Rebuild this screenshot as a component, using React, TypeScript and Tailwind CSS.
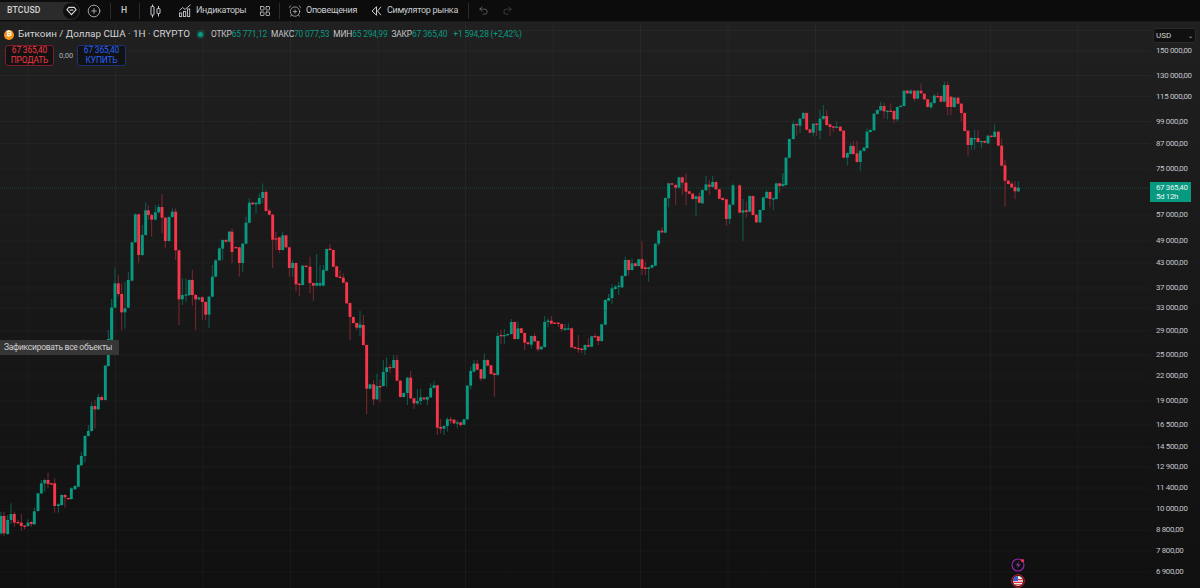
import { AlarmClockPlus, CirclePlus, LayoutGrid, Redo2, Undo2 } from "lucide-react";

const A = `g 3 348 400 335 405|r 12 348 400 335 408|g 23 360 402 345 405|g 33 342 360 310 372|r 43 342 368 335 380|r 54 366 369 360 372|r 64 368 378 342 392|r 74 377 381 375 388|g 84 368 378 358 380|r 94 366 372 364 380|g 103 334 373 322 375|g 114 280 333 278 335|g 124 250 280 240 283|g 134 240 250 236 275|r 144 240 252 218 265|r 154 250 252 248 255|r 164 250 318 235 338|g 175 313 318 310 338|g 185 285 315 283 318|r 195 285 292 282 323|r 205 294 297 292 299|g 214 265 297 262 299|g 225 258 268 255 270|g 235 195 260 192 262|g 244 168 196 155 198|g 255 108 168 105 188|g 265 93 108 75 110|g 275 18 93 5 95|r 285 18 28 0 85|g 295 -9 28 -18 30|r 305 -9 0 -14 3|g 316 -103 0 -106 2|g 325 -183 -102 -210 -100`;
const B = `g 35 413 510 388 512|g 45 340 413 292 415|r 55 340 372 315 380|r 65 372 427 340 480|g 75 415 427 335 475|g 85 330 413 305 415|g 96 217 332 215 334|g 106 133 217 130 219|r 116 133 255 130 278|g 127 195 255 165 258|g 137 121 195 97 197|r 145 121 135 105 150|r 155 135 149 130 200|g 166 127 149 105 151|g 176 111 127 103 130|r 186 111 143 72 190|r 196 143 213 140 235|g 207 141 213 139 215|g 217 125 141 115 143|r 227 125 241 115 270|r 237 241 388 239 465|g 247 375 388 325 405|g 258 373 376 325 395|g 268 330 375 328 378|r 277 330 375 300 407|r 287 375 388 372 480|g 297 382 388 380 392|r 307 382 396 378 450|r 317 396 434 394 450|g 327 380 434 378 474|g 337 320 380 285 382|g 347 271 320 268 322|g 358 235 271 232 273|g 368 210 236 208 270|r 378 210 215 207 218|g 388 185 215 183 217|r 396 185 246 175 280|r 408 231 234 229 236|r 418 232 279 230 320|g 428 221 279 219 305|g 438 158 221 140 223|g 448 98 158 85 160|r 458 98 103 96 105|g 468 98 103 96 130|g 478 84 102 70 104|g 488 66 84 40 100|r 498 66 123 60 125|r 508 122 134 116 136|r 518 134 209 132 295|r 528 205 208 185 240|r 538 202 240 200 250|g 548 196 240 185 242|r 558 196 232 194 234|r 568 232 294 230 320|g 578 279 294 270 320|r 588 279 343 277 365|r 598 341 345 338 378|g 608 287 345 285 347|r 618 287 290 285 292|r 630 290 339 260 370|r 640 339 347 337 392|g 650 339 347 252 349|g 660 339 347 285 349|g 670 300 347 285 349|g 680 237 302 235 304|r 690 236 240 222 242|r 700 240 290 238 292|r 710 289 321 287 323|r 720 320 324 300 326|r 730 323 338 310 340|r 740 337 400 335 402|r 750 399 441 397 510|r 760 441 459 439 461|r 770 459 473 457 480|g 780 463 473 455 475`;
const C = `g 60 255 263 213 290|r 70 255 315 225 317|r 80 315 446 313 522|g 90 433 446 431 448|r 101 433 478 420 495|g 111 438 478 400 480|r 120 438 440 418 487|g 130 396 438 360 440|g 140 382 396 352 440|r 150 381 384 372 400|g 161 360 384 345 386|r 171 360 422 345 424|r 181 422 471 420 473|g 191 459 471 457 473|g 202 413 459 411 495|r 212 413 475 393 477|r 222 475 490 473 507|g 232 483 490 447 495|g 242 472 483 447 495|r 252 473 478 471 480|g 262 471 479 469 495|g 272 444 472 430 474|g 282 436 444 423 446|r 292 436 563 434 585|r 302 561 566 537 580|g 312 558 566 556 585|g 322 538 558 532 575|r 332 538 540 530 552|r 342 539 550 537 552|g 352 547 550 540 565|r 362 547 555 545 560|g 372 538 554 536 556|g 382 437 538 435 540|g 392 393 437 380 448|g 402 371 395 360 397|r 412 371 389 360 391|r 423 388 416 386 423|g 433 360 416 340 418|r 443 360 377 358 379|r 453 376 402 374 404|r 463 400 405 398 470|g 473 288 405 278 407|r 483 285 287 270 313|g 493 285 288 267 313|g 503 282 285 280 287|g 514 246 282 237 284|r 524 246 297 244 299|g 534 265 297 245 299|r 544 265 279 263 281|r 554 279 308 277 330|r 564 307 312 305 316|g 574 288 314 286 325|r 584 288 304 280 306|r 594 303 328 301 335|g 604 320 328 318 330|g 614 246 321 228 323|g 624 242 246 235 262|r 634 242 251 228 253|r 644 248 250 246 252|r 655 248 252 246 262|r 665 252 267 250 275|g 675 265 270 252 272|g 685 265 268 250 270|r 695 265 322 263 324|r 705 321 325 319 327|r 715 324 327 285 338|r 725 326 330 324 340|g 735 315 330 313 345|r 745 315 320 295 322|g 755 289 320 287 322|r 765 288 291 280 293|r 775 289 303 287 315|g 785 253 303 251 305|g 796 181 254 179 256|g 806 174 182 162 184`;
const D = `g 36 355 384 343 402|g 46 350 357 345 359|g 56 347 350 335 375|g 66 318 352 315 354|g 76 270 318 260 320|r 86 270 300 268 315|g 96 280 300 265 302|r 106 280 288 278 290|g 116 268 288 266 290|r 126 268 296 213 315|r 136 292 297 275 315|g 146 292 297 290 335|g 156 285 293 283 295|g 166 221 287 219 289|g 176 182 221 180 228|r 186 182 187 172 189|g 196 84 188 82 190|g 206 40 85 38 112|r 216 40 44 38 46|r 227 45 53 43 104|g 237 22 53 20 55|r 247 22 38 20 75|r 258 38 65 12 105|r 268 64 71 62 73|r 278 71 87 69 89|g 288 79 87 77 140|r 298 79 98 68 100|g 307 60 100 58 102|g 318 43 61 18 63|r 328 44 50 30 75|g 338 36 51 18 53|r 348 36 58 34 60|r 358 58 86 56 88|r 368 84 90 82 92|r 379 88 147 86 168|g 389 104 147 102 162|g 399 46 104 40 106|r 419 46 128 44 130|g 429 121 128 87 213|r 439 121 126 95 143|g 449 78 125 76 127|r 459 78 135 76 137|r 469 134 157 132 159|g 480 120 157 118 159|g 490 82 120 80 122|g 500 66 84 60 86|r 510 66 87 64 112|g 520 85 87 82 120|g 529 40 87 38 89|r 539 40 48 38 68|g 549 42 48 10 50`;
const E = `g 18 263 345 261 347|g 8 343 346 310 350|g 28 207 263 205 265|g 40 162 207 152 209|r 50 162 165 160 197|g 60 146 167 144 190|g 70 129 146 125 148|r 80 129 179 127 181|r 90 178 188 176 190|g 100 161 188 159 200|r 110 161 164 159 197|g 120 146 182 120 208|g 130 138 147 105 149|r 140 138 165 120 167|r 150 163 171 161 197|r 160 169 173 167 185|g 170 170 173 155 175|r 181 170 183 168 185|r 191 182 263 180 265|g 202 249 263 247 287|g 212 228 252 220 254|r 220 228 252 213 254|r 231 250 276 212 278|g 241 242 276 240 302|g 252 233 243 231 245|g 261 185 234 175 236|g 271 180 186 178 188|g 282 131 181 129 183|g 292 120 132 118 134|g 302 108 121 95 123|r 312 108 124 98 145|g 322 122 124 120 148|r 332 122 124 100 126|r 342 123 148 121 160|g 352 111 148 109 155|g 362 107 111 105 113|g 372 62 108 60 110|r 382 62 70 60 72|g 392 62 71 58 73|r 403 62 86 60 95|g 413 62 86 60 88|r 423 62 70 40 72|r 433 71 88 69 90|r 443 88 111 86 113|g 453 98 112 96 116|g 463 77 99 72 101|r 473 78 80 68 82|r 483 78 95 76 97|g 493 45 95 35 97|r 503 45 111 35 135|r 513 80 111 78 135|g 523 83 111 81 113|r 534 83 101 81 103|r 544 101 129 99 155|r 554 129 183 127 185|r 564 182 225 180 260|g 574 204 225 202 240|g 584 204 208 180 238|r 594 204 216 180 218|g 604 213 216 211 235|r 614 213 218 211 220|g 624 197 220 195 222|r 634 197 201 195 203|g 644 185 201 163 203|r 655 185 227 183 229|r 665 227 287 205 289|r 675 286 332 270 410|r 685 332 342 330 344|r 695 341 352 335 354|r 705 351 364 333 388|g 715 353 364 333 366`;

type Candle = { up: boolean; x: number; t: number; b: number; wt: number; wb: number };
const parse = (s: string, ox: number, oy: number): Candle[] =>
  s.split("|").map((row) => {
    const [c, x, t, b, wt, wb] = row.split(" ");
    return { up: c === "g", x: ox + +x / 3, t: oy + +t / 3, b: oy + +b / 3, wt: oy + +wt / 3, wb: oy + +wb / 3 };
  });
const candles: Candle[] = [
  ...parse(A, 0, 400),
  { up: true, x: 111.7, t: 307.7, b: 339, wt: 299, wb: 340 },
  ...parse(B, 100, 170),
  ...parse(C, 340, 240),
  { up: true, x: 605.3, t: 300, b: 310, wt: 299, wb: 311 },
  ...parse(D, 600, 170),
  ...parse(E, 780, 70),
];

const prices: [string, number][] = [
  ["150 000,00", 51], ["130 000,00", 75.5], ["115 000,00", 96.5], ["99 000,00", 121.5], ["87 000,00", 143.5], ["75 000,00", 169],
  ["57 000,00", 215], ["49 000,00", 241], ["43 000,00", 263], ["37 000,00", 288], ["33 000,00", 308], ["29 000,00", 331],
  ["25 000,00", 355], ["22 000,00", 376], ["19 000,00", 401], ["16 500,00", 425], ["14 500,00", 447], ["12 900,00", 467],
  ["11 400,00", 488], ["10 000,00", 509], ["8 800,00", 530], ["7 800,00", 551], ["6 900,00", 572],
];
const verticals = Array.from({ length: 13 }, (_, i) => 28 + i * 87.5);

function Sep() {
  return <div className="h-[16px] w-px shrink-0 bg-[#2c2c2c]" />;
}

function Chart() {
  return (
    <svg className="block" width={1150} height={566} viewBox="0 22 1150 566">
      {verticals.map((x) => (
        <line key={x} x1={x} x2={x} y1={22} y2={588} stroke="#ffffff" strokeOpacity={0.035} />
      ))}
      {[30.5, ...prices.map((p) => p[1])].map((y) => (
        <line key={y} x1={0} x2={1150} y1={y} y2={y} stroke="#ffffff" strokeOpacity={0.035} />
      ))}
      <line x1={0} x2={1150} y1={188} y2={188} stroke="#089981" strokeOpacity={0.35} strokeDasharray="1 1" />
      {candles.map((c, i) => (
        <g key={i}>
          <line x1={c.x} x2={c.x} y1={c.wt} y2={c.wb} stroke={c.up ? "#0b5f52" : "#7e2631"} strokeWidth={1} />
          <rect x={c.x - 1.45} y={c.t} width={2.9} height={Math.max(c.b - c.t, 1.3)} fill={c.up ? "#089981" : "#f7364a"} />
        </g>
      ))}
    </svg>
  );
}

function Ohlc({ k, v }: { k: string; v: string }) {
  return (
    <span className="flex">
      <span className="text-[#c4c6cc]">{k}</span>
      <span className="text-[#089981]">{v}</span>
    </span>
  );
}

export default function App() {
  return (
    <div className="flex h-[588px] w-[1200px] flex-col overflow-hidden bg-[#0d0d0d] font-['Roboto',sans-serif] text-[#c9cbd0]">
      <header className="flex h-[22px] shrink-0 items-center border-b border-[#1a1a1a] bg-[#0c0c0c] text-[9px] tracking-[-0.3px]">
        <div className="flex h-[18px] w-[80px] items-center justify-between rounded-r-full bg-[#2b2b2b] pl-[7px] pr-[1px]">
          <span className="text-[8.6px] font-medium tracking-[0.2px] text-[#d4d4d4]">BTCUSD</span>
          <span className="flex h-[16px] w-[16px] items-center justify-center rounded-full bg-[#0f0f0f]">
            <svg width="11" height="10" viewBox="0 0 12 10" fill="none" stroke="#d8d8d8" strokeWidth="1.2">
              <path d="M3 1h6l2 2.6L6 9 1 3.6z" />
              <path d="M4 4h4" />
            </svg>
          </span>
        </div>
        <CirclePlus className="ml-[7px] text-[#d0d0d0]" size={14} strokeWidth={1.3} />
        <div className="ml-[9px]"><Sep /></div>
        <span className="ml-[10px] w-[7px] text-[8.6px] font-medium">H</span>
        <div className="ml-[11px]"><Sep /></div>
        <svg className="ml-[10px]" width="11" height="14" viewBox="0 0 11 14" fill="none" stroke="#c9cbd0" strokeWidth="1">
          <path d="M2.5 0.5v2M2.5 11v2.5M8.5 2v2.5M8.5 9.500v3" />
          <rect x="1" y="2.500" width="3" height="8.500" rx="0.5" />
          <rect x="7" y="4.500" width="3" height="5" rx="0.5" />
        </svg>
        <svg className="ml-[18px]" width="12" height="13" viewBox="0 0 12 13" fill="none" stroke="#c9cbd0" strokeWidth="0.9">
          <path d="M0.500 6.500 3.500 3.500 6 5.500 11.500 0.800" />
          <rect x="0.500" y="9" width="2.200" height="3.500" />
          <rect x="4.500" y="7.500" width="2.200" height="5" />
          <rect x="8.500" y="5" width="2.200" height="7.500" />
        </svg>
        <span className="ml-[5px] w-[50px] whitespace-nowrap">Индикаторы</span>
        <LayoutGrid className="ml-[13px] text-[#d4d6da]" size={12} strokeWidth={1.5} />
        <div className="ml-[8px]"><Sep /></div>
        <AlarmClockPlus className="ml-[8px] text-[#c9cbd0]" size={14} strokeWidth={1.2} />
        <span className="ml-[4px] w-[51px] whitespace-nowrap">Оповещения</span>
        <svg className="ml-[14px]" width="11" height="10" viewBox="0 0 11 10" fill="none" stroke="#c9cbd0" strokeWidth="1">
          <path d="M5.500 0.800 1 5l4.500 4.200zM10 0.800 6.500 5 10 9.200" />
        </svg>
        <span className="ml-[5px] w-[72px] whitespace-nowrap">Симулятор рынка</span>
        <div className="ml-[9px]"><Sep /></div>
        <Undo2 className="ml-[9px] text-[#8a8a8a]" size={11} strokeWidth={1.3} />
        <Redo2 className="ml-[13px] text-[#5a5a5a]" size={11} strokeWidth={1.3} />
      </header>

      <main className="flex flex-1 bg-linear-to-b from-[#202020] to-[#101010]">
        <div className="relative w-[1150px]">
          <Chart />

          <div className="absolute left-[4px] top-[6px] flex h-[13px] items-center">
            <span className="flex h-[10px] w-[10px] items-center justify-center rounded-full bg-[#f7931a] text-[7px] font-bold leading-none text-white">₿</span>
            <span className="ml-[4px] w-[172px] whitespace-nowrap text-[9.85px] text-[#d2d4d8]">Биткоин / Доллар США · 1H · CRYPTO</span>
            <span className="ml-[6px] flex h-[9px] w-[9px] items-center justify-center rounded-full bg-[#089981]/25">
              <span className="h-[5px] w-[5px] rounded-full bg-[#089981]" />
            </span>
            <div className="ml-[6px] flex gap-[4px] whitespace-nowrap text-[8.4px] tracking-[-0.15px]">
              <Ohlc k="ОТКР" v="65 771,12" />
              <Ohlc k="МАКС" v="70 077,53" />
              <Ohlc k="МИН" v="65 294,99" />
              <Ohlc k="ЗАКР" v="67 365,40" />
              <span className="ml-[2px] text-[#089981]">+1 594,28 (+2,42%)</span>
            </div>
          </div>

          <div className="absolute left-[5px] top-[23px] flex items-center">
            <div className="flex h-[21px] w-[49px] flex-col items-center justify-center rounded-[3px] border border-[#7c1f2a] bg-[#121212] text-[8.4px] leading-[9.5px] tracking-[-0.15px] text-[#f23645]">
              <span>67 365,40</span>
              <span>ПРОДАТЬ</span>
            </div>
            <span className="ml-[5px] w-[14px] text-[7.5px] text-[#b0b2b8]">0,00</span>
            <div className="ml-[4px] flex h-[21px] w-[49px] flex-col items-center justify-center rounded-[3px] border border-[#1b3478] bg-[#121212] text-[8.4px] leading-[9.5px] tracking-[-0.15px] text-[#2962ff]">
              <span>67 365,40</span>
              <span>КУПИТЬ</span>
            </div>
          </div>

          <div className="absolute left-0 top-[318px] flex h-[15px] w-[119px] items-center bg-[#363636] pl-[4px] text-[8.5px] tracking-[-0.28px] whitespace-nowrap text-[#d0d0d0]">
            Зафиксировать все объекты
          </div>

          <div className="absolute left-[1011px] top-[536px] h-[14px] w-[14px]">
            <svg width="14" height="14" viewBox="0 0 14 14" fill="none">
              <circle cx="7" cy="7" r="6" stroke="#8e24aa" strokeWidth="1.2" />
              <path d="M8 3.500 5 7.500h2.500L6 10.500 9.500 6.500H7z" fill="#9c3fc0" />
              <circle cx="11.500" cy="2.500" r="1.600" fill="#f23645" />
            </svg>
          </div>
          <div className="absolute left-[1011px] top-[552px] h-[14px] w-[14px]">
            <svg width="14" height="14" viewBox="0 0 14 14">
              <circle cx="7" cy="7" r="6.300" fill="none" stroke="#d8202f" strokeWidth="1" />
              <circle cx="7" cy="7" r="5" fill="#f0f0f0" />
              <path d="M2.400 5h9.200v1.300H2.400zM2.200 7.700h9.600V9H2.200zM3.400 10.300h7.200v1H3.400z" fill="#e0303c" />
              <path d="M2 7A5 5 0 0 1 7 2v5z" fill="#3a5fc8" />
            </svg>
          </div>
        </div>

        <div className="relative w-[50px]">
          <div className="absolute left-[3px] top-[6px] flex h-[15px] w-[43px] items-center justify-between rounded-[3px] border border-[#2a2a2a] bg-[#101010] pl-[2px] pr-[2px] text-[8px] text-[#d0d0d0]">
            <span>USD</span>
            <span className="text-[6px] leading-none">⌄</span>
          </div>
          {prices.map(([label, y]) => (
            <span
              key={label}
              className="absolute left-[6px] -translate-y-1/2 whitespace-nowrap text-[7.9px] leading-none tracking-[-0.33px] text-[#c4c6cc]"
              style={{ top: y - 22 }}
            >
              {label}
            </span>
          ))}
          <div className="absolute left-0 top-[160px] flex h-[20px] w-[41px] flex-col justify-center whitespace-nowrap bg-[#089981] pl-[6px] text-[7.9px] leading-[9px] tracking-[-0.33px] text-[#e6f5f2]">
            <span>67 365,40</span>
            <span>5d 12h</span>
          </div>
        </div>
      </main>
    </div>
  );
}
